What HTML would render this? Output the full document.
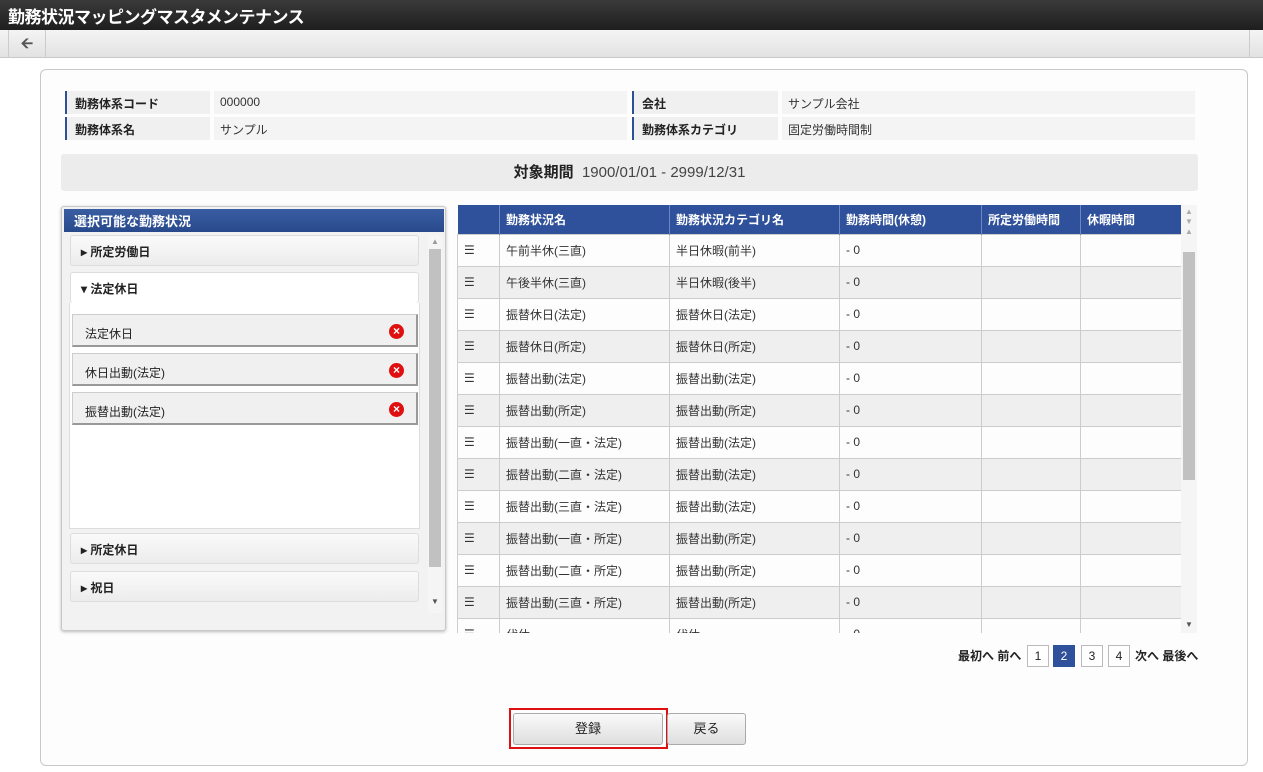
<!DOCTYPE html>
<html><head><meta charset="utf-8"><style>
*{box-sizing:border-box;margin:0;padding:0}
body{width:1263px;height:772px;overflow:hidden;background:#fff;font-family:"Liberation Sans","Noto Sans CJK JP",sans-serif;font-size:12px;color:#222;position:relative}
.abs{position:absolute}
.title{left:0;top:0;width:1263px;height:30px;background:linear-gradient(#3a3a3a,#1e1e1e);color:#fff;font-size:17px;font-weight:bold;padding:3px 8px;letter-spacing:-0.5px}
.tool{left:0;top:30px;width:1263px;height:28px;background:linear-gradient(#f4f4f4,#e2e2e2);border-bottom:1px solid #c8c8c8}
.panel{left:40px;top:69px;width:1208px;height:697px;border:1px solid #c8c8c8;border-radius:6px;background:#fdfdfd}
.lab{background:#f0f0f0;border-left:2px solid #2d4f94;font-weight:bold;padding:4px 8px;height:23px;font-size:12px}
.val{background:#f4f4f4;padding:4px 6px;height:23px;font-size:12px;color:#333}
.period{left:61px;top:154px;width:1137px;height:37px;background:#ececec;border-radius:3px;text-align:center;line-height:37px;font-size:15px}
.lp{left:61px;top:206px;width:385px;height:425px;border:1px solid #c8c8c8;border-radius:3px;background:#f2f2f2;box-shadow:0 1px 3px #bbb}
.lph{left:2px;top:2px;width:380px;height:23px;background:linear-gradient(#3a5da3,#284a8c);color:#fff;font-weight:bold;font-size:13px;padding:2px 10px}
.acc{position:absolute;left:8px;width:349px;height:31px;background:linear-gradient(#fafafa,#ececec);border:1px solid #ddd;border-radius:3px;font-weight:bold;padding:7px 10px}
.it{position:absolute;left:10px;width:346px;height:33px;background:#f0f0f0;border:1px solid #999;border-top-color:#ccc;border-left-color:#ccc;border-width:1px 2px 2px 1px;padding:10px 12px}
.x{position:absolute;right:12px;top:9px;width:15px;height:15px;border-radius:50%;background:#e01010;color:#fff;font-size:12px;font-weight:bold;line-height:15px;text-align:center}
table{border-collapse:collapse;position:absolute;left:457px;top:205px;width:724px;table-layout:fixed}
th{background:#2f509a;color:#fff;text-align:left;font-size:12px;font-weight:bold;height:29px;padding:0 6px;border-left:1px solid #6b86c0}
td{height:32px;border:1px solid #ccc;padding:0 6px;font-size:12px;color:#333}
tr:nth-child(odd) td{background:#efefef}
.pg{position:absolute;top:645px;height:22px;font-weight:bold;font-size:12px;line-height:22px}
.pb{position:absolute;top:645px;width:22px;height:22px;border:1px solid #bbb;background:#fff;text-align:center;line-height:20px;font-size:12px}
.btn{position:absolute;top:713px;height:32px;background:linear-gradient(#fafafa,#dedede);border:1px solid #aaa;border-radius:3px;text-align:center;line-height:30px;font-size:13px}
</style></head><body>
<div class="abs title">勤務状況マッピングマスタメンテナンス</div>
<div class="abs tool"><div class="abs" style="left:8px;top:0;width:38px;height:28px;border-left:1px solid #ccc;border-right:1px solid #ccc;text-align:center;line-height:27px;color:#555;font-size:15px;font-weight:bold">&#129128;</div><div class="abs" style="left:1249px;top:0;width:1px;height:28px;background:#ccc"></div></div>
<div class="abs panel"></div>
<div class="abs lab" style="left:65px;top:91px;width:145px">勤務体系コード</div>
<div class="abs val" style="left:214px;top:91px;width:413px">000000</div>
<div class="abs lab" style="left:65px;top:117px;width:145px">勤務体系名</div>
<div class="abs val" style="left:214px;top:117px;width:413px">サンプル</div>
<div class="abs lab" style="left:632px;top:91px;width:146px">会社</div>
<div class="abs val" style="left:782px;top:91px;width:413px">サンプル会社</div>
<div class="abs lab" style="left:632px;top:117px;width:146px">勤務体系カテゴリ</div>
<div class="abs val" style="left:782px;top:117px;width:413px">固定労働時間制</div>
<div class="abs period"><b>対象期間</b>&nbsp; <span style="color:#444">1900/01/01 - 2999/12/31</span></div>
<div class="abs lp">
<div class="abs lph">選択可能な勤務状況</div>
<div class="acc" style="top:28px">▸ 所定労働日</div>
<div class="acc" style="top:65px;background:#fff;border-bottom:none">▾ 法定休日</div>
<div class="abs" style="left:7px;top:96px;width:351px;height:226px;background:#fff;border:1px solid #ddd;border-top:none"></div>
<div class="it" style="top:107px">法定休日<div class="x">×</div></div>
<div class="it" style="top:146px">休日出動(法定)<div class="x">×</div></div>
<div class="it" style="top:185px">振替出動(法定)<div class="x">×</div></div>
<div class="acc" style="top:326px">▸ 所定休日</div>
<div class="acc" style="top:364px">▸ 祝日</div>
<div class="abs" style="left:366px;top:28px;width:14px;height:378px;background:#f5f5f5"></div>
<div class="abs" style="left:367px;top:42px;width:12px;height:318px;background:#c1c1c1"></div>
<div class="abs" style="left:369px;top:30px;font-size:8px;color:#999">▲</div>
<div class="abs" style="left:369px;top:390px;font-size:8px;color:#555">▼</div>
</div>
<div class="abs" style="left:457px;top:205px;width:724px;height:428px;overflow:hidden">
<table style="left:0;top:0">
<colgroup><col style="width:42px"><col style="width:170px"><col style="width:170px"><col style="width:142px"><col style="width:99px"><col style="width:101px"></colgroup>
<tr><th style="border-left:none"></th><th>勤務状況名</th><th>勤務状況カテゴリ名</th><th>勤務時間(休憩)</th><th>所定労働時間</th><th>休暇時間</th></tr>
<tr><td>☰</td><td>午前半休(三直)</td><td>半日休暇(前半)</td><td>- 0</td><td></td><td></td></tr>
<tr><td>☰</td><td>午後半休(三直)</td><td>半日休暇(後半)</td><td>- 0</td><td></td><td></td></tr>
<tr><td>☰</td><td>振替休日(法定)</td><td>振替休日(法定)</td><td>- 0</td><td></td><td></td></tr>
<tr><td>☰</td><td>振替休日(所定)</td><td>振替休日(所定)</td><td>- 0</td><td></td><td></td></tr>
<tr><td>☰</td><td>振替出動(法定)</td><td>振替出動(法定)</td><td>- 0</td><td></td><td></td></tr>
<tr><td>☰</td><td>振替出動(所定)</td><td>振替出動(所定)</td><td>- 0</td><td></td><td></td></tr>
<tr><td>☰</td><td>振替出動(一直・法定)</td><td>振替出動(法定)</td><td>- 0</td><td></td><td></td></tr>
<tr><td>☰</td><td>振替出動(二直・法定)</td><td>振替出動(法定)</td><td>- 0</td><td></td><td></td></tr>
<tr><td>☰</td><td>振替出動(三直・法定)</td><td>振替出動(法定)</td><td>- 0</td><td></td><td></td></tr>
<tr><td>☰</td><td>振替出動(一直・所定)</td><td>振替出動(所定)</td><td>- 0</td><td></td><td></td></tr>
<tr><td>☰</td><td>振替出動(二直・所定)</td><td>振替出動(所定)</td><td>- 0</td><td></td><td></td></tr>
<tr><td>☰</td><td>振替出動(三直・所定)</td><td>振替出動(所定)</td><td>- 0</td><td></td><td></td></tr>
<tr><td>☰</td><td>代休</td><td>代休</td><td>- 0</td><td></td><td></td></tr>
</table></div>
<div class="abs" style="left:1181px;top:205px;width:16px;height:428px;background:#f5f5f5"></div>
<div class="abs" style="left:1183px;top:252px;width:12px;height:228px;background:#c1c1c1"></div>
<div class="abs" style="left:1185px;top:207px;font-size:8px;color:#aaa;line-height:10px">▲<br>▼<br>▲</div>
<div class="abs" style="left:1185px;top:620px;font-size:8px;color:#555">▼</div>
<div class="pg" style="left:958px">最初へ 前へ</div>
<div class="pb" style="left:1027px">1</div>
<div class="pb" style="left:1053px;background:#2f509a;color:#fff;border-color:#2f509a">2</div>
<div class="pb" style="left:1081px">3</div>
<div class="pb" style="left:1108px">4</div>
<div class="pg" style="left:1135px">次へ 最後へ</div>
<div class="abs" style="left:509px;top:708px;width:159px;height:41px;border:2px solid #e01010"></div>
<div class="btn" style="left:513px;width:150px">登録</div>
<div class="btn" style="left:667px;width:79px">戻る</div>
</body></html>
